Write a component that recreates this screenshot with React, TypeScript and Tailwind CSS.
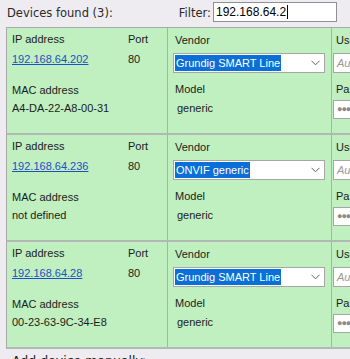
import React from "react";

const rows = [
  { ip: "192.168.64.202", port: "80", mac: "A4-DA-22-A8-00-31", vendor: "Grundig SMART Line", model: "generic" },
  { ip: "192.168.64.236", port: "80", mac: "not defined", vendor: "ONVIF generic", model: "generic" },
  { ip: "192.168.64.28", port: "80", mac: "00-23-63-9C-34-E8", vendor: "Grundig SMART Line", model: "generic" },
];

function Chevron() {
  return (
    <svg width="9" height="6" viewBox="0 0 9 6" className="shrink-0">
      <path d="M0.5 0.8 L4.5 4.8 L8.5 0.8" fill="none" stroke="#606060" strokeWidth="1" />
    </svg>
  );
}

function Row({ r }: { r: (typeof rows)[number] }) {
  const t = "text-[11px] leading-[13px] text-[#1c1c1c] whitespace-nowrap";
  return (
    <div className="flex h-[107px] border-b-2 border-[#b4b8b4] bg-[#c0efc0]">
      {/* col 1 */}
      <div className="w-[160px] shrink-0 pl-[5px] grid grid-cols-[116px_1fr] content-start">
        <div className="flex flex-col">
          <div className={`${t} mt-[5px]`}>IP address</div>
          <div className={`${t} mt-[7px] text-[#1f4fc4] underline`}>{r.ip}</div>
          <div className={`${t} mt-[18px]`}>MAC address</div>
          <div className={`${t} mt-[5px]`}>{r.mac}</div>
        </div>
        <div className="flex flex-col">
          <div className={`${t} mt-[5px]`}>Port</div>
          <div className={`${t} mt-[7px]`}>{r.port}</div>
        </div>
      </div>
      {/* col 2 */}
      <div className="w-[164px] shrink-0 border-l border-[#a9b2a9] pl-[5px] flex flex-col">
        <div className={`${t} mt-[6px] pl-[2px]`}>Vendor</div>
        <div className="mt-[6px] h-[20px] w-[152px] bg-white border border-[#a6a6a6] flex items-center pl-[1px] pr-[4px]">
          <span className="text-[11px] leading-[16px] h-[16px] bg-[#0a6fd6] text-white px-[1px] whitespace-nowrap">{r.vendor}</span>
          <div className="ml-auto"><Chevron /></div>
        </div>
        <div className={`${t} mt-[10px] pl-[2px]`}>Model</div>
        <div className={`${t} mt-[6px] pl-[4px]`}>{r.model}</div>
      </div>
      {/* col 3 */}
      <div className="flex-1 border-l border-[#a9b2a9] pl-[1px] flex flex-col overflow-hidden">
        <div className={`${t} mt-[6px] pl-[3px]`}>Username</div>
        <div className="mt-[6px] h-[20px] w-[120px] bg-white border border-[#a6a6a6] flex items-center pl-[3px]">
          <span className="text-[11px] italic text-[#9a9a9a] whitespace-nowrap">Auto</span>
        </div>
        <div className={`${t} mt-[10px] pl-[3px]`}>Password</div>
        <div className="mt-[4px] h-[19px] w-[120px] bg-white border border-[#a6a6a6] flex items-center pl-[3px]">
          <span className="text-[9px] tracking-[-1px] text-[#8a8a8a] whitespace-nowrap">●●●●●●</span>
        </div>
      </div>
    </div>
  );
}

export default function App() {
  return (
    <div className="w-[350px] h-[359px] overflow-hidden bg-[#eeecf1] font-['Liberation_Sans',Arial,sans-serif]">
      {/* header */}
      <div className="h-[27px] flex items-start">
        <div className="pl-[7px] pt-[6px] text-[11.5px] leading-[14px] text-[#2a2a2a] font-['DejaVu_Sans',sans-serif] whitespace-nowrap">
          Devices found (3):
        </div>
        <div className="ml-auto flex items-start mr-[13px]">
          <div className="pt-[6px] mr-[2px] text-[11.5px] leading-[14px] text-[#2a2a2a] font-['DejaVu_Sans',sans-serif]">Filter:</div>
          <div className="mt-[2px] w-[124px] h-[20px] bg-white border border-[#8f8f8f] flex items-center pl-[2px]">
            <span className="text-[12px] leading-[14px] text-black">192.168.64.2</span>
            <span className="w-px h-[14px] bg-black ml-px" />
          </div>
        </div>
      </div>
      {/* panel */}
      <div className="ml-[6px] border-l border-t border-[#aaaaaa]">
        {rows.map((r) => (
          <Row key={r.ip} r={r} />
        ))}
      </div>
      <div className="pl-[12px] pt-[4px] text-[12.5px] leading-[15px] text-[#222] font-['DejaVu_Sans',sans-serif] whitespace-nowrap">
        Add device manually:
      </div>
    </div>
  );
}
